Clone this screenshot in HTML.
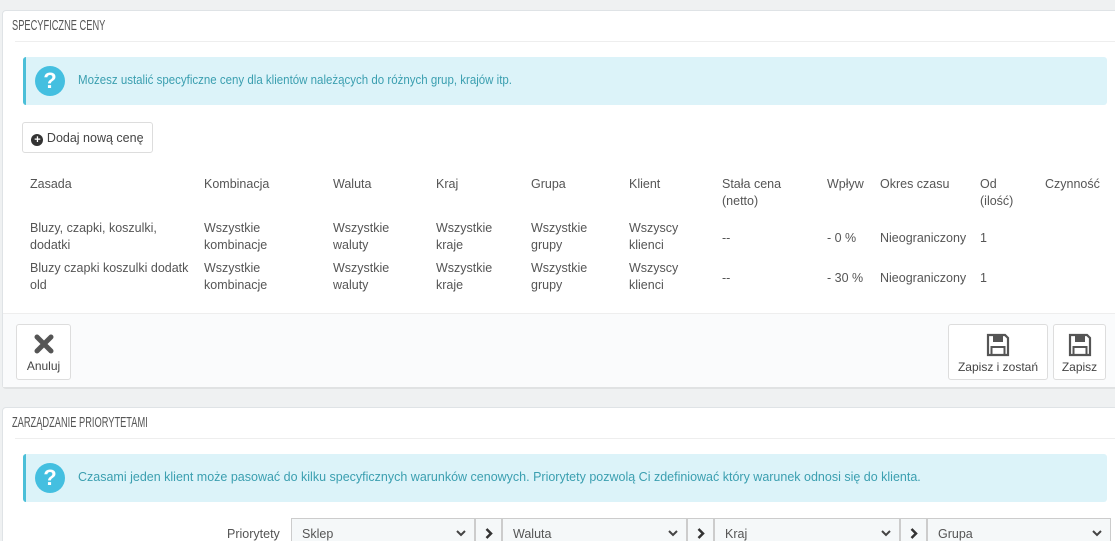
<!DOCTYPE html>
<html style="width:1115px;height:541px;overflow:hidden"><head><meta charset="utf-8"><style>
*{box-sizing:border-box;margin:0;padding:0}
body{width:1115px;height:541px;overflow:hidden;background:#eff1f2;font-family:"Liberation Sans",sans-serif;font-size:12.5px;color:#555;position:relative}
.panel{position:absolute;left:2px;width:1120px;background:#fff;border:1px solid #dfe3e6;border-radius:4px;box-shadow:0 2px 0 rgba(0,0,0,.06)}
.hd{position:absolute;left:9px;font-size:14.5px;color:#555;transform:scaleX(0.64);transform-origin:0 0;white-space:nowrap}
.line{position:absolute;left:12px;right:0;height:1px;background:#eee}
.alert{position:absolute;left:20px;width:1084px;height:48px;background:#dcf3f9;border-left:3px solid #4bbfd8;border-radius:3px}
.alert .q{position:absolute;left:9px;top:9px;width:30px;height:30px;border-radius:50%;background:#44bfe0;color:#fff;font-weight:bold;font-size:22px;text-align:center;line-height:30px}
.alert .t{position:absolute;left:52px;top:16px;color:#3b9fb0;font-size:12.5px;transform:scaleX(0.92);transform-origin:0 0;white-space:nowrap}
.c{position:absolute;line-height:17px}
.btn{position:absolute;border:1px solid #ddd;border-radius:3px;background:#fff;text-align:center;color:#444}
.sel{position:absolute;top:518px;height:30px;border:1px solid #ccc;background:#f5f8f9;padding:8px 10px;color:#555}
.sel svg{position:absolute;right:8px;top:11px}
.arr{position:absolute;top:518px;height:30px;width:27px;border:1px solid #ccc;background:#f5f8f9;text-align:center;padding-top:9px}
</style></head><body>
<div class="panel" style="top:10px;height:377px">
  <div class="hd" style="top:7px">SPECYFICZNE CENY</div>
  <div class="line" style="top:30px"></div>
  <div class="alert" style="top:46px"><div class="q">?</div><div class="t">Możesz ustalić specyficzne ceny dla klientów należących do różnych grup, krajów itp.</div></div>
  <div class="btn" style="left:19px;top:111px;width:131px;height:31px;padding-top:8px;font-size:12.5px"><span style="display:inline-block;width:12px;height:12px;border-radius:50%;background:#333;color:#fff;font-size:11px;line-height:12px;font-weight:bold;vertical-align:-1px">+</span> Dodaj nową cenę</div>
  <div style="position:absolute;left:0;right:0;top:302px;height:74px;background:#fafbfc;border-top:1px solid #eee"></div>
</div>
<div class="c" style="left:30px;top:176px">Zasada</div>
<div class="c" style="left:204px;top:176px">Kombinacja</div>
<div class="c" style="left:333px;top:176px">Waluta</div>
<div class="c" style="left:436px;top:176px">Kraj</div>
<div class="c" style="left:531px;top:176px">Grupa</div>
<div class="c" style="left:629px;top:176px">Klient</div>
<div class="c" style="left:722px;top:176px">Stała cena<br>(netto)</div>
<div class="c" style="left:827px;top:176px">Wpływ</div>
<div class="c" style="left:880px;top:176px">Okres czasu</div>
<div class="c" style="left:980px;top:176px">Od<br>(ilość)</div>
<div class="c" style="left:1045px;top:176px">Czynność</div>

<div class="c" style="left:30px;top:220px">Bluzy, czapki, koszulki,<br>dodatki</div>
<div class="c" style="left:204px;top:220px">Wszystkie<br>kombinacje</div>
<div class="c" style="left:333px;top:220px">Wszystkie<br>waluty</div>
<div class="c" style="left:436px;top:220px">Wszystkie<br>kraje</div>
<div class="c" style="left:531px;top:220px">Wszystkie<br>grupy</div>
<div class="c" style="left:629px;top:220px">Wszyscy<br>klienci</div>
<div class="c" style="left:722px;top:230px">--</div>
<div class="c" style="left:827px;top:230px">- 0 %</div>
<div class="c" style="left:880px;top:230px">Nieograniczony</div>
<div class="c" style="left:980px;top:230px">1</div>

<div class="c" style="left:30px;top:260px">Bluzy czapki koszulki dodatk<br>old</div>
<div class="c" style="left:204px;top:260px">Wszystkie<br>kombinacje</div>
<div class="c" style="left:333px;top:260px">Wszystkie<br>waluty</div>
<div class="c" style="left:436px;top:260px">Wszystkie<br>kraje</div>
<div class="c" style="left:531px;top:260px">Wszystkie<br>grupy</div>
<div class="c" style="left:629px;top:260px">Wszyscy<br>klienci</div>
<div class="c" style="left:722px;top:270px">--</div>
<div class="c" style="left:827px;top:270px">- 30 %</div>
<div class="c" style="left:880px;top:270px">Nieograniczony</div>
<div class="c" style="left:980px;top:270px">1</div>

<div class="btn" style="left:16px;top:324px;width:55px;height:56px;padding-top:8px">
<svg width="22" height="22" viewBox="0 0 22 22"><path d="M4 4L18 18M18 4L4 18" stroke="#555" stroke-width="5" stroke-linecap="round"/></svg><div style="font-size:12px;margin-top:1px">Anuluj</div></div>
<div class="btn" style="left:948px;top:324px;width:100px;height:56px;padding-top:8px">
<svg width="24" height="24" viewBox="0 0 24 24"><path d="M2 2H19L22 5V22H2Z" fill="none" stroke="#555" stroke-width="2.2"/><rect x="7" y="2" width="10" height="7" fill="#555"/><rect x="5.5" y="14" width="13" height="8" fill="none" stroke="#555" stroke-width="2"/></svg><div style="font-size:12px">Zapisz i zostań</div></div>
<div class="btn" style="left:1053px;top:324px;width:53px;height:56px;padding-top:8px">
<svg width="24" height="24" viewBox="0 0 24 24"><path d="M2 2H19L22 5V22H2Z" fill="none" stroke="#555" stroke-width="2.2"/><rect x="7" y="2" width="10" height="7" fill="#555"/><rect x="5.5" y="14" width="13" height="8" fill="none" stroke="#555" stroke-width="2"/></svg><div style="font-size:12px">Zapisz</div></div>

<div class="panel" style="top:407px;height:160px">
  <div class="hd" style="top:7px">ZARZĄDZANIE PRIORYTETAMI</div>
  <div class="line" style="top:30px"></div>
  <div class="alert" style="top:46px"><div class="q">?</div><div class="t" style="transform:none">Czasami jeden klient może pasować do kilku specyficznych warunków cenowych. Priorytety pozwolą Ci zdefiniować który warunek odnosi się do klienta.</div></div>
</div>
<div class="c" style="left:227px;top:526px">Priorytety</div>
<div class="sel" style="left:291px;width:184px">Sklep<svg width="10" height="7" viewBox="0 0 10 7"><path d="M1 1L5 5L9 1" fill="none" stroke="#444" stroke-width="2"/></svg></div>
<div class="arr" style="left:475px"><svg width="8" height="11" viewBox="0 0 8 11"><path d="M1.5 1L6 5.5L1.5 10" fill="none" stroke="#333" stroke-width="2.5"/></svg></div>
<div class="sel" style="left:502px;width:185px">Waluta<svg width="10" height="7" viewBox="0 0 10 7"><path d="M1 1L5 5L9 1" fill="none" stroke="#444" stroke-width="2"/></svg></div>
<div class="arr" style="left:687px"><svg width="8" height="11" viewBox="0 0 8 11"><path d="M1.5 1L6 5.5L1.5 10" fill="none" stroke="#333" stroke-width="2.5"/></svg></div>
<div class="sel" style="left:714px;width:186px">Kraj<svg width="10" height="7" viewBox="0 0 10 7"><path d="M1 1L5 5L9 1" fill="none" stroke="#444" stroke-width="2"/></svg></div>
<div class="arr" style="left:900px"><svg width="8" height="11" viewBox="0 0 8 11"><path d="M1.5 1L6 5.5L1.5 10" fill="none" stroke="#333" stroke-width="2.5"/></svg></div>
<div class="sel" style="left:927px;width:184px">Grupa<svg width="10" height="7" viewBox="0 0 10 7"><path d="M1 1L5 5L9 1" fill="none" stroke="#444" stroke-width="2"/></svg></div>
</body></html>
